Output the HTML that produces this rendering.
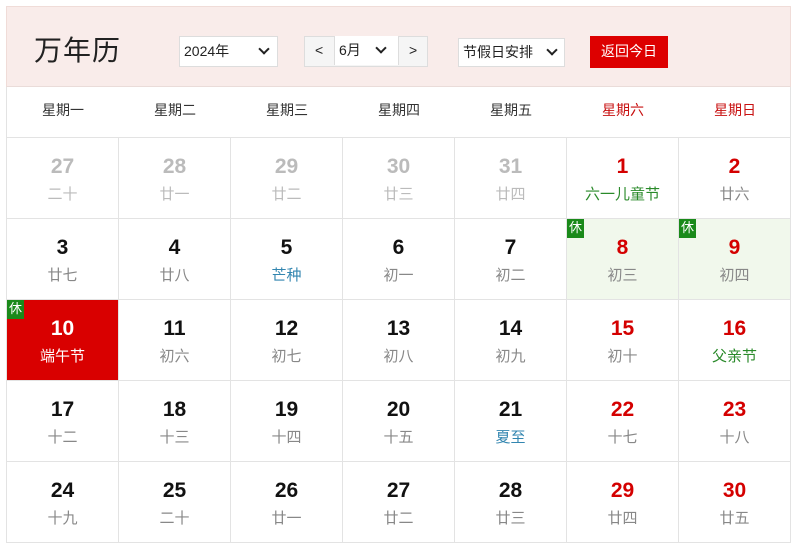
<!DOCTYPE html>
<html><head><meta charset="utf-8"><style>
*{margin:0;padding:0;box-sizing:border-box}
body{width:796px;height:548px;background:#fff;font-family:"Liberation Sans","Noto Sans CJK SC",sans-serif;position:relative;overflow:hidden}
.hdr{position:absolute;left:6px;top:6px;width:785px;height:81px;background:#f9ecea;border:1px solid #f0dcd8;border-bottom:1px solid #eadcd9}
.title{position:absolute;left:34px;top:29px;font-size:28px;color:#222;letter-spacing:1px}
.sel{position:absolute;background:#fff;border:1px solid #ddd;font-size:14px;color:#222;height:31px;line-height:29px}
.chev{position:absolute;width:8px;height:8px;border-right:2.5px solid #222;border-bottom:2.5px solid #222;transform:rotate(45deg)}
.btn{position:absolute;left:590px;top:36px;width:78px;height:32px;background:#dd0000;color:#fff;font-size:14px;line-height:30px;text-align:center}
.wk{position:absolute;left:6px;top:87px;width:785px;height:50px;border-left:1px solid #e3e3e3;border-right:1px solid #e3e3e3}
.wk div{position:absolute;top:0;width:112px;text-align:center;line-height:46px;font-size:14px;color:#333}
.grid{position:absolute;left:6px;top:137px;width:785px;display:grid;grid-template-columns:repeat(7,112px);border-left:1px solid #e3e3e3;border-top:1px solid #e3e3e3}
.c{height:81px;border-right:1px solid #e3e3e3;border-bottom:1px solid #e3e3e3;text-align:center;position:relative}
.n{position:absolute;left:0;right:0;top:17px;font-size:21px;font-weight:bold;color:#111}
.l{position:absolute;left:0;right:0;top:45px;font-size:15px;color:#888}
.g .n,.g .l{color:#bbb}
.r .n{color:#d40000}
.h .l{color:#2a8a2a}
.t .l{color:#3386b0}
.x{position:absolute;left:0;top:0;width:17px;height:19px;background:#1a8a1a;color:#fff;font-size:13px;line-height:18px;text-align:center}
.rest{background:#f1f8ec}
.today{background:#d90000}
.today .n,.today .l{color:#fff}
</style></head><body>
<div class="hdr"></div>
<div class="title">万年历</div>
<div class="sel" style="left:179px;top:36px;width:99px;padding-left:4px">2024年<span class="chev" style="left:80px;top:8px"></span></div>
<div class="sel" style="left:304px;top:36px;width:124px;background:#f5f5f5">
<span style="position:absolute;left:10px;top:-1px">&lt;</span>
<span style="position:absolute;left:29px;top:-1px;width:65px;height:29px;background:#fff;border-left:1px solid #ddd;border-right:1px solid #ddd;padding-left:4px">6月<span class="chev" style="left:42px;top:8px"></span></span>
<span style="position:absolute;left:104px;top:-1px">&gt;</span></div>
<div class="sel" style="left:458px;top:38px;width:107px;height:29px;line-height:27px;padding-left:4px">节假日安排<span class="chev" style="left:89px;top:7px"></span></div>
<div class="btn">返回今日</div>
<div class="wk">
<div style="left:0">星期一</div><div style="left:112px">星期二</div><div style="left:224px">星期三</div><div style="left:336px">星期四</div><div style="left:448px">星期五</div><div style="left:560px;color:#c81010">星期六</div><div style="left:672px;color:#c81010">星期日</div></div>
<div class="grid">
<div class="c g"><div class="n">27</div><div class="l">二十</div></div>
<div class="c g"><div class="n">28</div><div class="l">廿一</div></div>
<div class="c g"><div class="n">29</div><div class="l">廿二</div></div>
<div class="c g"><div class="n">30</div><div class="l">廿三</div></div>
<div class="c g"><div class="n">31</div><div class="l">廿四</div></div>
<div class="c r h"><div class="n">1</div><div class="l">六一儿童节</div></div>
<div class="c r"><div class="n">2</div><div class="l">廿六</div></div>

<div class="c"><div class="n">3</div><div class="l">廿七</div></div>
<div class="c"><div class="n">4</div><div class="l">廿八</div></div>
<div class="c t"><div class="n">5</div><div class="l">芒种</div></div>
<div class="c"><div class="n">6</div><div class="l">初一</div></div>
<div class="c"><div class="n">7</div><div class="l">初二</div></div>
<div class="c r rest"><div class="x">休</div><div class="n">8</div><div class="l">初三</div></div>
<div class="c r rest"><div class="x">休</div><div class="n">9</div><div class="l">初四</div></div>

<div class="c today"><div class="x">休</div><div class="n">10</div><div class="l">端午节</div></div>
<div class="c"><div class="n">11</div><div class="l">初六</div></div>
<div class="c"><div class="n">12</div><div class="l">初七</div></div>
<div class="c"><div class="n">13</div><div class="l">初八</div></div>
<div class="c"><div class="n">14</div><div class="l">初九</div></div>
<div class="c r"><div class="n">15</div><div class="l">初十</div></div>
<div class="c r h"><div class="n">16</div><div class="l">父亲节</div></div>

<div class="c"><div class="n">17</div><div class="l">十二</div></div>
<div class="c"><div class="n">18</div><div class="l">十三</div></div>
<div class="c"><div class="n">19</div><div class="l">十四</div></div>
<div class="c"><div class="n">20</div><div class="l">十五</div></div>
<div class="c t"><div class="n">21</div><div class="l">夏至</div></div>
<div class="c r"><div class="n">22</div><div class="l">十七</div></div>
<div class="c r"><div class="n">23</div><div class="l">十八</div></div>

<div class="c"><div class="n">24</div><div class="l">十九</div></div>
<div class="c"><div class="n">25</div><div class="l">二十</div></div>
<div class="c"><div class="n">26</div><div class="l">廿一</div></div>
<div class="c"><div class="n">27</div><div class="l">廿二</div></div>
<div class="c"><div class="n">28</div><div class="l">廿三</div></div>
<div class="c r"><div class="n">29</div><div class="l">廿四</div></div>
<div class="c r"><div class="n">30</div><div class="l">廿五</div></div>
</div>
</body></html>
